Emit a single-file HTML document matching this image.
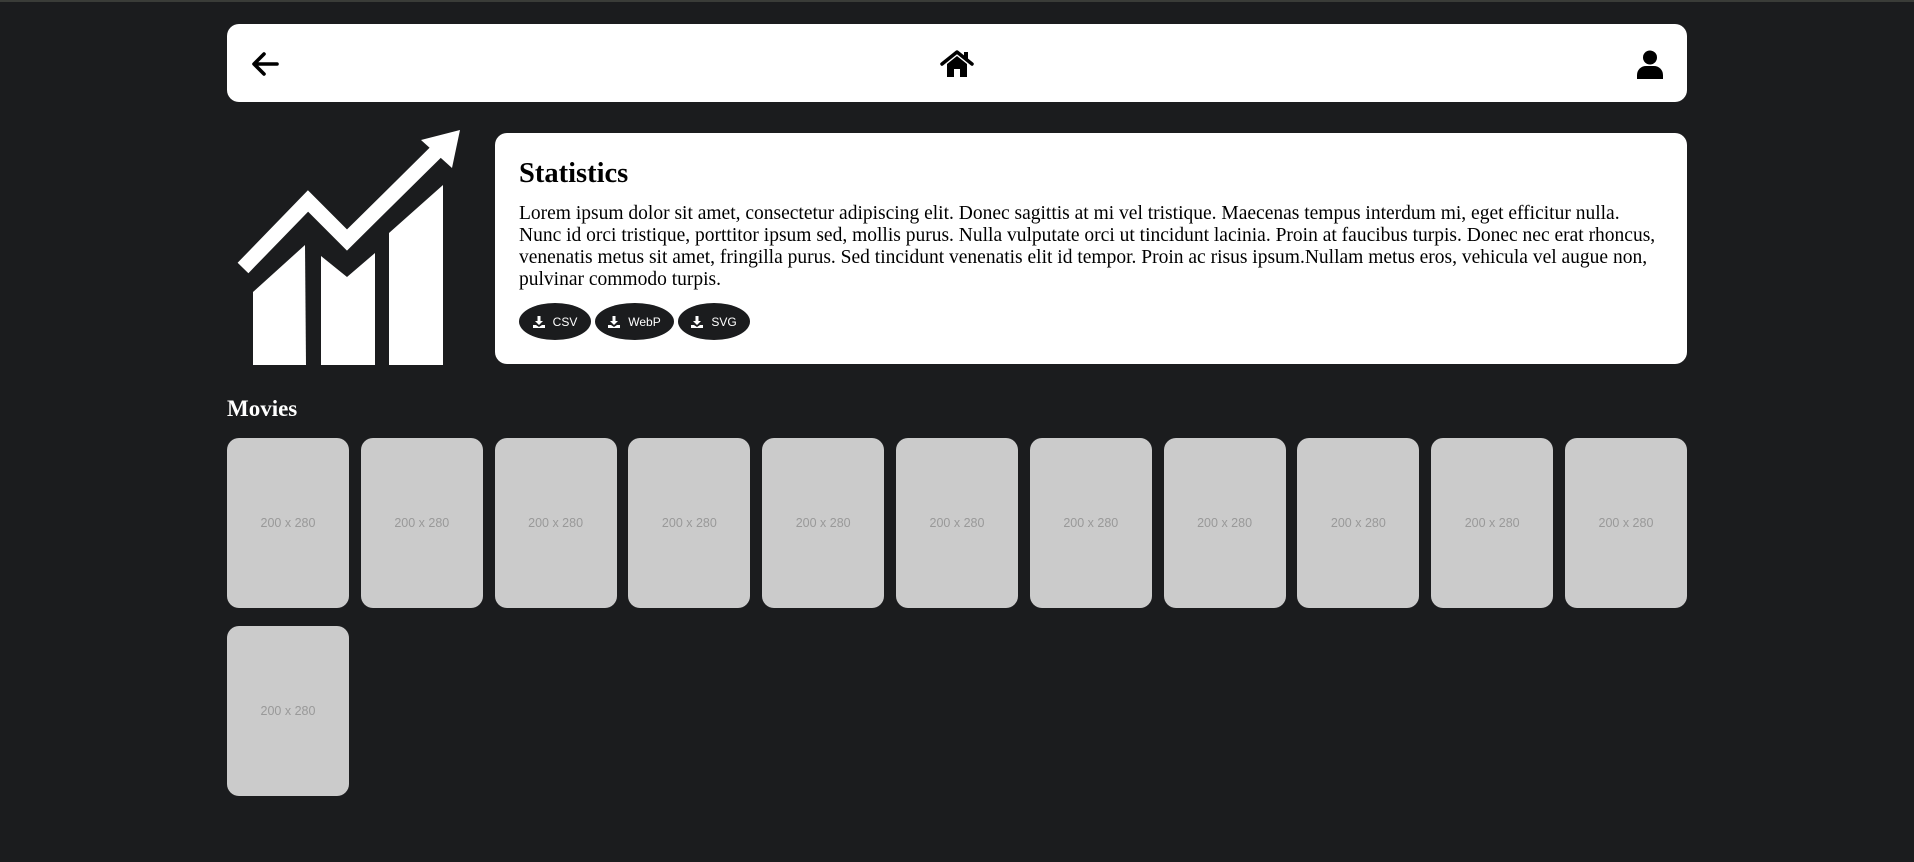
<!DOCTYPE html>
<html><head><meta charset="utf-8"><style>
*{box-sizing:border-box;margin:0;padding:0}
html,body{width:1914px;height:862px;overflow:hidden;background:#1b1c1e;font-family:"Liberation Serif",serif}
body{position:relative}
.top{position:absolute;left:0;top:0;width:1914px;height:2px;background:#3a3c38}
.hdr{position:absolute;left:227px;top:24px;width:1460px;height:78px;background:#fff;border-radius:12px}
.card{position:absolute;left:495px;top:133px;width:1192px;height:231px;background:#fff;border-radius:12px;padding:25px 24px}
.card h2{font-size:28.5px;font-weight:bold;line-height:32px;margin-top:0;color:#000}
.card p{font-size:19.5px;line-height:22px;margin-top:13px;color:#000}
.btns{position:absolute;left:24px;top:170px;display:flex;gap:4px}
.b{height:37px;background:#1b1c1e;color:#fff;border-radius:50%;font:12px "Liberation Sans",sans-serif;display:flex;align-items:center;justify-content:center;gap:8px}
.mv{position:absolute;left:227px;top:396px;color:#fff;font-size:23px;font-weight:bold}
.grid{position:absolute;left:227px;top:438px;width:1460px;display:grid;grid-template-columns:repeat(11,122px);column-gap:11.8px;row-gap:18px}
.p{height:170px;background:#cbcbcb;border-radius:12px;display:flex;align-items:center;justify-content:center;color:#999;font:12.5px "Liberation Sans",sans-serif}
</style></head><body>
<div class="top"></div>
<div class="hdr">
<svg style="position:absolute;left:24px;top:27px" width="28" height="26" viewBox="0 0 28 26"><path d="M26 13H4M13 3L3 13l10 10" stroke="#000" stroke-width="3.6" fill="none" stroke-linecap="round" stroke-linejoin="round"/></svg>
<svg style="position:absolute;left:713px;top:25px" width="34" height="30" viewBox="0 0 34 30"><path d="M2 15L17 3l15 12" stroke="#000" stroke-width="3.5" fill="none" stroke-linecap="round" stroke-linejoin="round"/><path d="M24 3h4v8l-4-3z" fill="#000"/><path d="M7 15L17 7l10 8v13h-7v-8h-6v8H7z" fill="#000"/></svg>
<svg style="position:absolute;left:1409px;top:26px" width="28" height="30" viewBox="0 0 28 30"><circle cx="14" cy="7.5" r="7" fill="#000"/><path d="M1 29v-4a9 9 0 0 1 9-9h8a9 9 0 0 1 9 9v4z" fill="#000"/></svg>
</div>
<svg style="position:absolute;left:225px;top:125px" width="245" height="250" viewBox="0 0 245 250"><g fill="#fff"><polygon points="28,167 80,120 81,240 28,240"/><polygon points="96,131 122,152 150,128 150,240 96,240"/><polygon points="164,108 218,60 218,240 164,240"/><polygon points="196,15 235,5 227,43"/></g><polyline points="18,143 83,76 122,115 214,24" stroke="#fff" stroke-width="15" fill="none"/></svg>
<div class="card"><h2>Statistics</h2>
<p>Lorem ipsum dolor sit amet, consectetur adipiscing elit. Donec sagittis at mi vel tristique. Maecenas tempus interdum mi, eget efficitur nulla. Nunc id orci tristique, porttitor ipsum sed, mollis purus. Nulla vulputate orci ut tincidunt lacinia. Proin at faucibus turpis. Donec nec erat rhoncus, venenatis metus sit amet, fringilla purus. Sed tincidunt venenatis elit id tempor. Proin ac risus ipsum.Nullam metus eros, vehicula vel augue non, pulvinar commodo turpis.</p>
<div class="btns">
<div class="b" style="width:72px"><svg width="12" height="12" viewBox="0 0 12 12"><path d="M4.5 0h3v5h2.5L6 9 2 5h2.5z M0 9h3l3 2 3-2h3v3H0z" fill="#fff"/></svg>CSV</div>
<div class="b" style="width:79px"><svg width="12" height="12" viewBox="0 0 12 12"><path d="M4.5 0h3v5h2.5L6 9 2 5h2.5z M0 9h3l3 2 3-2h3v3H0z" fill="#fff"/></svg>WebP</div>
<div class="b" style="width:72px"><svg width="12" height="12" viewBox="0 0 12 12"><path d="M4.5 0h3v5h2.5L6 9 2 5h2.5z M0 9h3l3 2 3-2h3v3H0z" fill="#fff"/></svg>SVG</div>
</div></div>
<div class="mv">Movies</div>
<div class="grid">
<div class="p">200 x 280</div><div class="p">200 x 280</div><div class="p">200 x 280</div><div class="p">200 x 280</div><div class="p">200 x 280</div><div class="p">200 x 280</div><div class="p">200 x 280</div><div class="p">200 x 280</div><div class="p">200 x 280</div><div class="p">200 x 280</div><div class="p">200 x 280</div><div class="p">200 x 280</div>
</div>
</body></html>
